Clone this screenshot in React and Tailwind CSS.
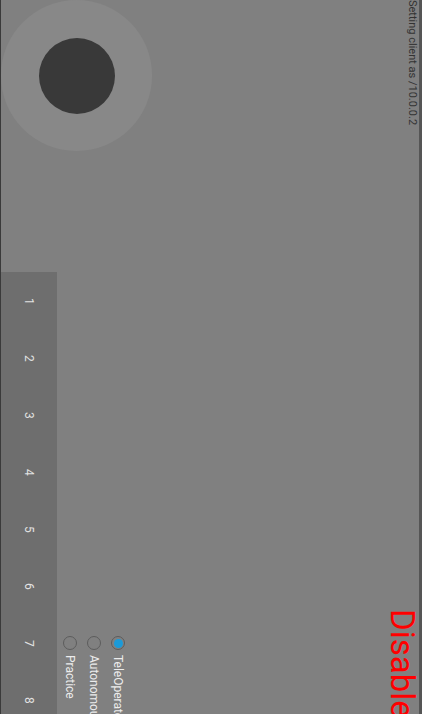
import React, { useState } from 'react';

const MODES = ['Practice', 'Autonomous', 'TeleOperated'];
const SLOTS = [1, 2, 3, 4, 5, 6, 7, 8];

const App = () => {
    const [mode, setMode] = useState('TeleOperated');

    return (
        <div className="flex h-[714px] w-[422px] overflow-hidden bg-[#808080] font-['Roboto',sans-serif]">
            <div className="w-px shrink-0 bg-[#3a3a3a]" />

            {/* left: joystick + slots + modes */}
            <div className="flex w-[151px] shrink-0 flex-col">
                <div className="h-[272px] shrink-0">
                    <div className="flex h-[151px] w-[151px] items-center justify-center rounded-full bg-[#888888]">
                        <div className="h-[76px] w-[76px] rounded-full bg-[#393939]" />
                    </div>
                </div>
                <div className="flex min-h-0 flex-1">
                    <div className="flex w-[56px] shrink-0 flex-col bg-[#6e6e6e]">
                        {SLOTS.map(n => (
                            <div key={n} className="flex h-[57px] shrink-0 items-center justify-center pt-[2px] text-[12px] leading-none text-[#e2e2e2] [writing-mode:vertical-rl]">
                                {n}
                            </div>
                        ))}
                    </div>
                    <div className="ml-px flex items-start pt-[364px]">
                        {MODES.map(m => (
                            <button key={m} type="button" onClick={() => setMode(m)}
                                className="flex w-[24px] flex-col items-center gap-[5px]">
                                <span className="flex h-[14px] w-[14px] items-center justify-center rounded-full border-[1.5px] border-[#5c5c5c]">
                                    {mode === m && <span className="h-[9px] w-[9px] rounded-full bg-[#1b9ad8]" />}
                                </span>
                                <span className="whitespace-nowrap text-[12px] leading-[14px] text-[#ececec] [writing-mode:vertical-rl]">{m}</span>
                            </button>
                        ))}
                    </div>
                </div>
            </div>

            <div className="flex-1" />

            {/* right: status */}
            <div className="flex w-[38px] shrink-0 flex-col">
                <div className="flex h-[609px] shrink-0 justify-end">
                    <span className="whitespace-nowrap text-[11px] leading-[13px] text-[#333333] [writing-mode:vertical-rl]">
                        Setting client as /10.0.0.2
                    </span>
                </div>
                <span className="whitespace-nowrap text-[33px] leading-none text-[#ff0000] [writing-mode:vertical-rl]">
                    Disabled
                </span>
            </div>
            <div className="w-[3px] shrink-0 bg-[#555555]" />
        </div>
    );
};

export default App;
